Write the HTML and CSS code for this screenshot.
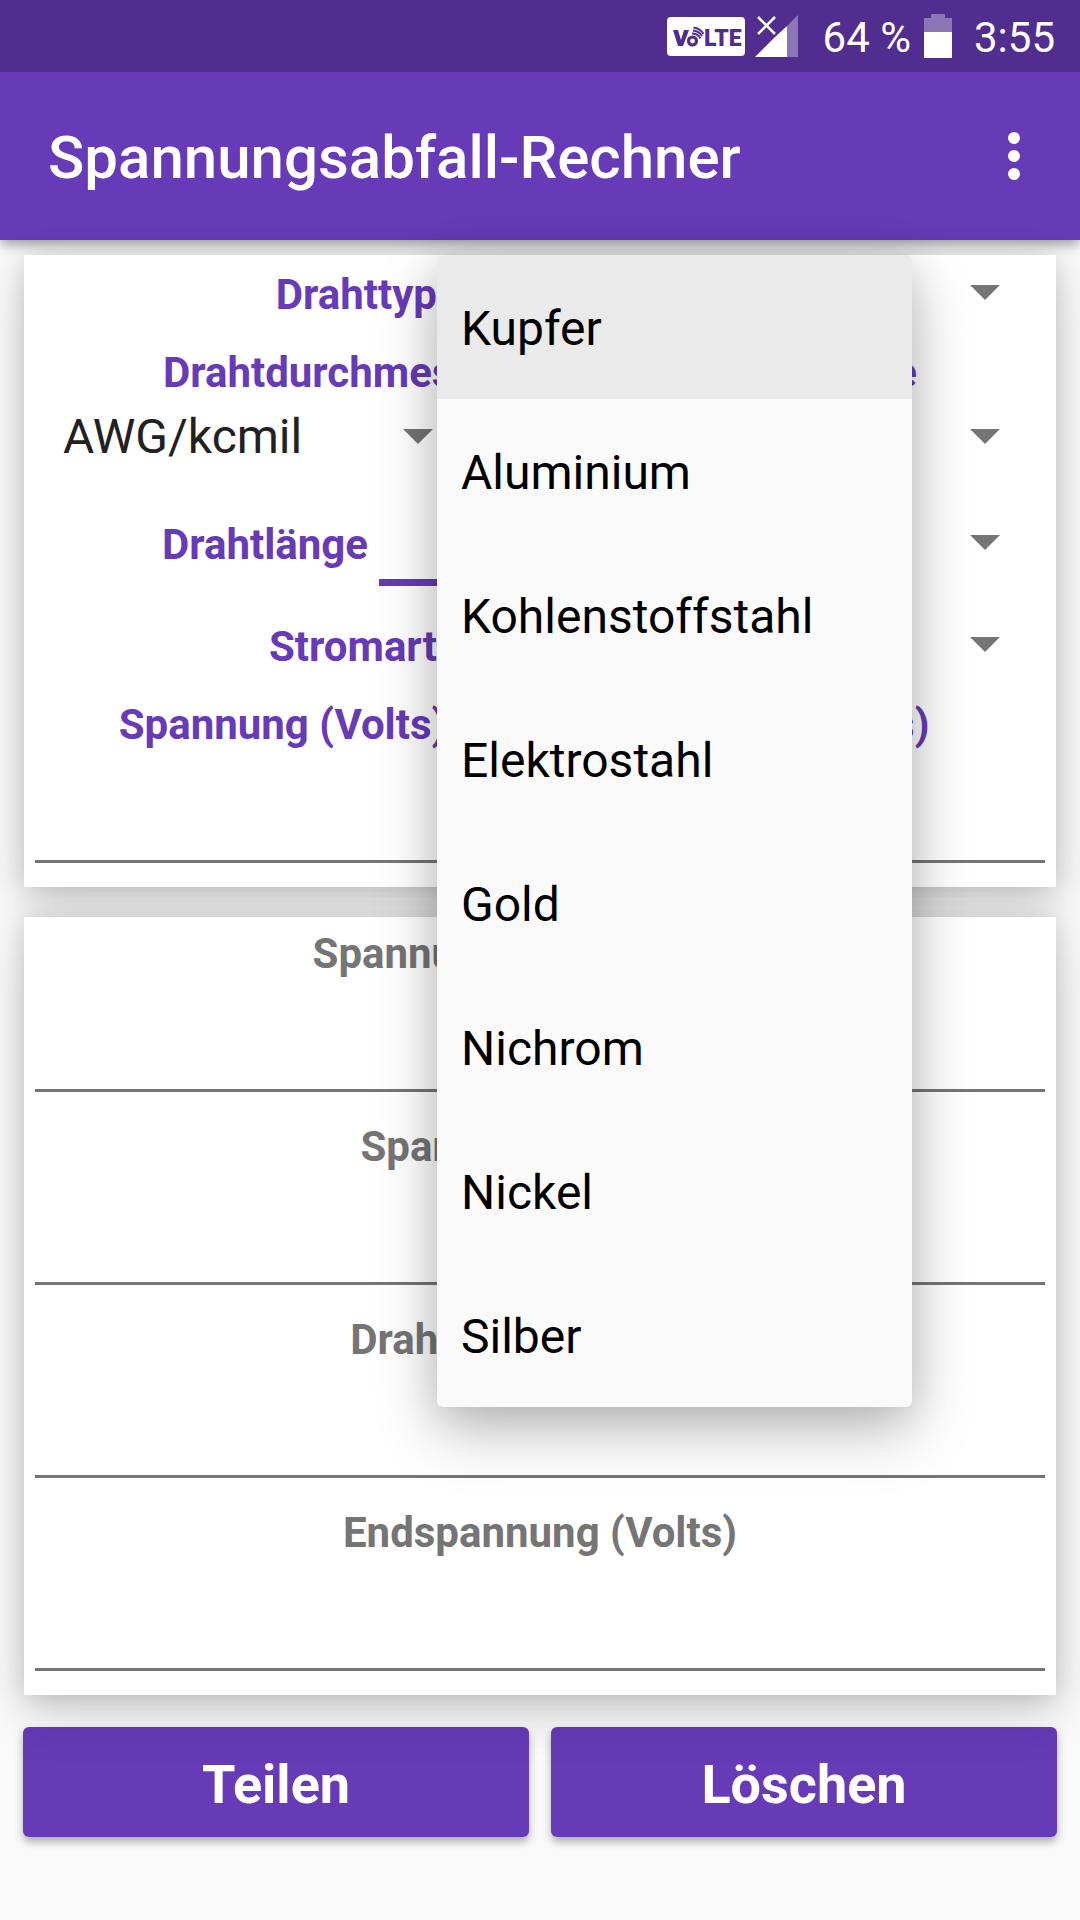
FILE: index.html
```html
<!DOCTYPE html>
<html lang="de">
<head>
  <meta charset="utf-8">
  <meta name="viewport" content="width=device-width, initial-scale=1">
  <title>Spannungsabfall-Rechner</title>
  <link rel="stylesheet" href="styles.css">
</head>
<body>
  <div class="status-bar">
    <svg class="volte" width="78" height="39" viewBox="0 0 78 39" aria-label="VoLTE">
      <rect width="78" height="39" rx="4" fill="#fff"/>
      <path d="M6 13h5l3 10 3-10h5l-6 16h-5z" fill="#512d8f"/>
      <circle cx="25.500" cy="24" r="4" fill="none" stroke="#512d8f" stroke-width="3.200"/>
      <path d="M25 16.500q6 0 8.500 5M26.500 10.500q7 1 10 6.500M26 13.500q6 .5 9 5.500" fill="none" stroke="#512d8f" stroke-width="1.800"/>
      <text x="37" y="29" class="volte-text">LTE</text>
    </svg>
    <svg class="signal" width="44" height="42" viewBox="0 0 44 42" aria-hidden="true">
      <path d="M43 0v42H32V11z" fill="#fff" fill-opacity=".35"/>
      <path d="M32 11v31H0l19-19z" fill="#fff"/>
      <path d="M3 2l17 17M20 2L3 19" stroke="#fff" stroke-width="2.500"/>
    </svg>
    <span class="status-text battery-level">64 %</span>
    <svg class="battery" width="28" height="44" viewBox="0 0 28 44" aria-hidden="true">
      <path d="M7 0h14v4h7v14H0V4h7z" fill="#fff" fill-opacity=".35"/>
      <path d="M0 18h28v26H0z" fill="#fff"/>
    </svg>
    <span class="status-text">3:55</span>
  </div>

  <header class="app-bar">
    <h1 class="title">Spannungsabfall-Rechner</h1>
    <button class="menu-button" type="button" aria-label="Weitere Optionen">
      <svg width="12" height="48" viewBox="0 0 12 48" aria-hidden="true">
        <g fill="#fff"><circle cx="6" cy="6" r="6"/><circle cx="6" cy="24" r="6"/><circle cx="6" cy="42" r="6"/></g>
      </svg>
    </button>
  </header>

  <form class="form">
    <div class="cards">
      <section class="card inputs">
        <div class="row row-type">
          <label class="label end" for="type">Drahttyp</label>
          <div class="picker">
            <select class="select" id="type"><option>Kupfer</option></select>
            <ul class="popup" role="listbox" aria-label="Drahttyp">
              <li class="option selected" role="option" aria-selected="true">Kupfer</li>
              <li class="option" role="option">Aluminium</li>
              <li class="option" role="option">Kohlenstoffstahl</li>
              <li class="option" role="option">Elektrostahl</li>
              <li class="option" role="option">Gold</li>
              <li class="option" role="option">Nichrom</li>
              <li class="option" role="option">Nickel</li>
              <li class="option" role="option">Silber</li>
            </ul>
          </div>
        </div>
        <div class="headings">
          <label class="label" for="gauge">Drahtdurchmesser</label>
          <label class="label" for="size">Drahtgröße</label>
        </div>
        <div class="row row-gauge">
          <select class="select" id="gauge"><option>AWG/kcmil</option></select>
          <select class="select" id="size"><option>10</option></select>
        </div>
        <div class="row row-length">
          <label class="label end" for="length">Drahtlänge</label>
          <input class="text-input active" id="length" type="text">
          <select class="select" aria-label="Einheit"><option>Fuß</option></select>
        </div>
        <div class="row row-current">
          <label class="label end" for="current">Stromart</label>
          <select class="select" id="current"><option>DC</option></select>
        </div>
        <div class="row row-values">
          <div class="field">
            <label class="label" for="volts">Spannung (Volts)</label>
            <input class="text-input" id="volts" type="text">
          </div>
          <div class="field">
            <label class="label" for="amps">Strom (Amps)</label>
            <input class="text-input" id="amps" type="text">
          </div>
        </div>
      </section>

      <section class="card results">
        <div class="field">
          <label class="label" for="drop">Spannungsabfall (Volts)</label>
          <input class="text-input" id="drop" type="text" readonly>
        </div>
        <div class="field">
          <label class="label" for="percent">Spannungsabfall %</label>
          <input class="text-input" id="percent" type="text" readonly>
        </div>
        <div class="field">
          <label class="label" for="resistance">Drahtwiderstand (Ω)</label>
          <input class="text-input" id="resistance" type="text" readonly>
        </div>
        <div class="field">
          <label class="label" for="end">Endspannung (Volts)</label>
          <input class="text-input" id="end" type="text" readonly>
        </div>
      </section>
    </div>

    <div class="actions">
      <button class="button" type="button">Teilen</button>
      <button class="button" type="reset">Löschen</button>
    </div>
  </form>
</body>
</html>
```
FILE: styles.css
```css
* {
  box-sizing: border-box;
}

body {
  margin: 0;
  background: #fafafa;
  color: #212121;
  font-family: Roboto, "Noto Sans", sans-serif;
}

/* Status bar */
.status-bar {
  position: relative;
  z-index: 1;
  display: flex;
  align-items: center;
  justify-content: flex-end;
  height: 72px;
  padding-right: 25px;
  background: #512d8f;
  color: #fff;
}

.volte-text {
  fill: #512d8f;
  font-size: 23px;
  font-weight: 900;
}

.signal {
  margin-left: 10px;
}

.status-text {
  padding-top: 3px;
  font-size: 42px;
  line-height: 50px;
}

.battery-level {
  margin: 0 13px 0 24px;
}

.battery {
  margin-right: 22px;
}

/* App bar */
.app-bar {
  display: flex;
  align-items: center;
  justify-content: space-between;
  height: 168px;
  padding: 0 36px 0 48px;
  background: #673ab7;
  box-shadow: 0 4px 12px rgba(0, 0, 0, .4);
  color: #fff;
}

.title {
  margin: 4px 0 0;
  font-size: 60px;
  font-weight: 500;
  line-height: 70px;
}

.menu-button {
  display: flex;
  justify-content: center;
  width: 60px;
  padding: 12px 0;
  border: 0;
  background: none;
}

/* Form */
.form {
  padding: 15px 23px;
}

.cards {
  position: relative;
  z-index: 1;
  display: grid;
  gap: 30px;
  margin: 0 1px;
}

.card {
  position: relative;
  padding: 0 11px 24px;
  background: #fff;
}

/* The shadow sits below both cards, so that neither darkens the other */
.card::before {
  position: absolute;
  z-index: -1;
  inset: 0;
  box-shadow: 0 20px 48px rgba(0, 0, 0, .16), 0 2px 24px rgba(0, 0, 0, .15);
  content: "";
}

.label {
  display: block;
  font-size: 42px;
  font-weight: 700;
  line-height: 56px;
  text-align: center;
}

.inputs .label {
  color: #673ab7;
}

.results .label {
  color: #757575;
}

.row .end {
  padding-top: 5px;
  text-align: right;
}

.row {
  display: grid;
  align-items: center;
}

.row-type {
  height: 75px;
  grid-template-columns: 402fr 608fr;
}

.headings {
  display: flex;
  justify-content: space-between;
  padding: 15px 128px 7px;
}

.row-gauge {
  grid-template-columns: 443fr 567fr;
}

.row-length {
  height: 100px;
  margin-top: 28px;
  grid-template-columns: 333fr 300fr 355fr;
  column-gap: 11px;
}

.row-current {
  height: 105px;
  grid-template-columns: 402fr 608fr;
}

.row-values {
  grid-template-columns: 1fr 1fr;
  column-gap: 20px;
}

.select {
  width: 100%;
  height: 56px;
  padding: 2px 60px 0 28px;
  border: 0;
  appearance: none;
  background: url("data:image/svg+xml,%3Csvg xmlns='http://www.w3.org/2000/svg' width='30' height='15'%3E%3Cpath d='M0 0h30L15 15z' fill='%23757575'/%3E%3C/svg%3E") no-repeat right 45px center;
  color: #212121;
  font: 400 48px/54px Roboto, "Noto Sans", sans-serif;
}

.text-input {
  display: block;
  width: 100%;
  height: 110px;
  padding: 0 12px;
  border: 0;
  border-bottom: 3px solid #757575;
  background: none;
  font: 400 48px/56px Roboto, "Noto Sans", sans-serif;
}

.text-input.active {
  height: 88px;
  border-bottom: 7px solid #673ab7;
}

.results {
  display: grid;
  gap: 27px;
  padding-top: 9px;
}

/* Drop-down list */
.picker {
  position: relative;
  display: flex;
  align-items: center;
  height: 75px;
}

.popup {
  position: absolute;
  z-index: 2;
  top: 0;
  left: 0;
  width: 475px;
  margin: 0;
  padding: 0;
  overflow: hidden;
  border-radius: 6px;
  background: #fafafa;
  box-shadow: 0 24px 64px rgba(0, 0, 0, .24), 0 8px 40px rgba(0, 0, 0, .12);
  color: #000;
  list-style: none;
}

.option {
  padding: 46px 24px 42px;
  font-size: 48px;
  line-height: 56px;
}

.option.selected {
  background: #eaeaea;
}

/* Buttons */
.actions {
  display: grid;
  grid-template-columns: 1fr 1fr;
  gap: 22px;
  margin-top: 32px;
}

.button {
  height: 110px;
  padding: 6px 0 0;
  border: 0;
  border-radius: 6px;
  background: #673ab7;
  box-shadow: 0 5px 8px rgba(0, 0, 0, .3);
  color: #fff;
  font: 700 54px/64px Roboto, "Noto Sans", sans-serif;
}
```
